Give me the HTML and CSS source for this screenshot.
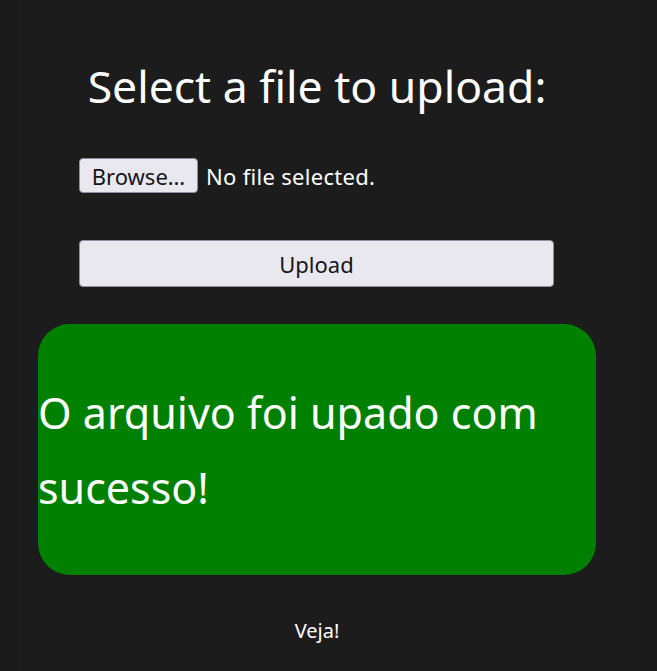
FILE: index.html
```html
<!DOCTYPE html>
<html lang="pt">
<head>
<meta charset="utf-8">
<title>Upload</title>
<link rel="stylesheet" href="styles.css">
</head>
<body>
<div class="page">
  <main class="content">
    <h1 class="title">Select a file to upload:</h1>
    <form class="form">
      <div class="file-row">
        <button type="button" class="browse">Browse…</button>
        <span class="file-name">No file selected.</span>
      </div>
      <button type="button" class="upload">Upload</button>
    </form>
    <div class="success">
      <p class="success-text">O arquivo foi upado com sucesso!</p>
    </div>
    <p class="veja">Veja!</p>
  </main>
</div>
</body>
</html>
```

FILE: styles.css
```css
* { box-sizing: border-box; }
html, body { margin: 0; padding: 0; }
body {
  background: #1a1a1a;
  color: #ffffff;
  font-family: "Noto Sans", "Open Sans", sans-serif;
}
.page {
  margin-left: 18px;
  width: 622px;
  min-height: 671px;
  background: #1c1c1c;
  padding-top: 1px;
}
.content {
  margin-left: 20px;
  width: 558px;
  display: flex;
  flex-direction: column;
}
.title {
  margin: 56px 0 0 0;
  text-align: center;
  font-weight: 400;
  font-size: 44.5px;
  line-height: 57px;
}
.form {
  margin: 44px 0 0 41px;
  width: 475px;
  display: flex;
  flex-direction: column;
}
.file-row {
  display: flex;
  align-items: center;
  gap: 8px;
  height: 35px;
}
.browse {
  flex: none;
  height: 35px;
  width: 119px;
  padding: 0;
  background: #e9e8ee;
  border: 1px solid #8f8f9d;
  border-radius: 4px;
  color: #15141a;
  font-family: inherit;
  font-size: 22px;
}
.file-name {
  font-size: 22px;
  letter-spacing: 0.3px;
}
.upload {
  margin-top: 47px;
  height: 47px;
  width: 475px;
  background: #e9e8ee;
  border: 1px solid #8f8f9d;
  border-radius: 4px;
  color: #15141a;
  font-family: inherit;
  font-size: 22px;
}
.success {
  margin-top: 37px;
  height: 251px;
  background: #008000;
  border-radius: 32px;
  display: flex;
  align-items: center;
}
.success-text {
  margin: 0;
  font-size: 43px;
  line-height: 75px;
}
.veja {
  margin: 43px 0 0 0;
  text-align: center;
  font-size: 20px;
  line-height: 26px;
}
```
